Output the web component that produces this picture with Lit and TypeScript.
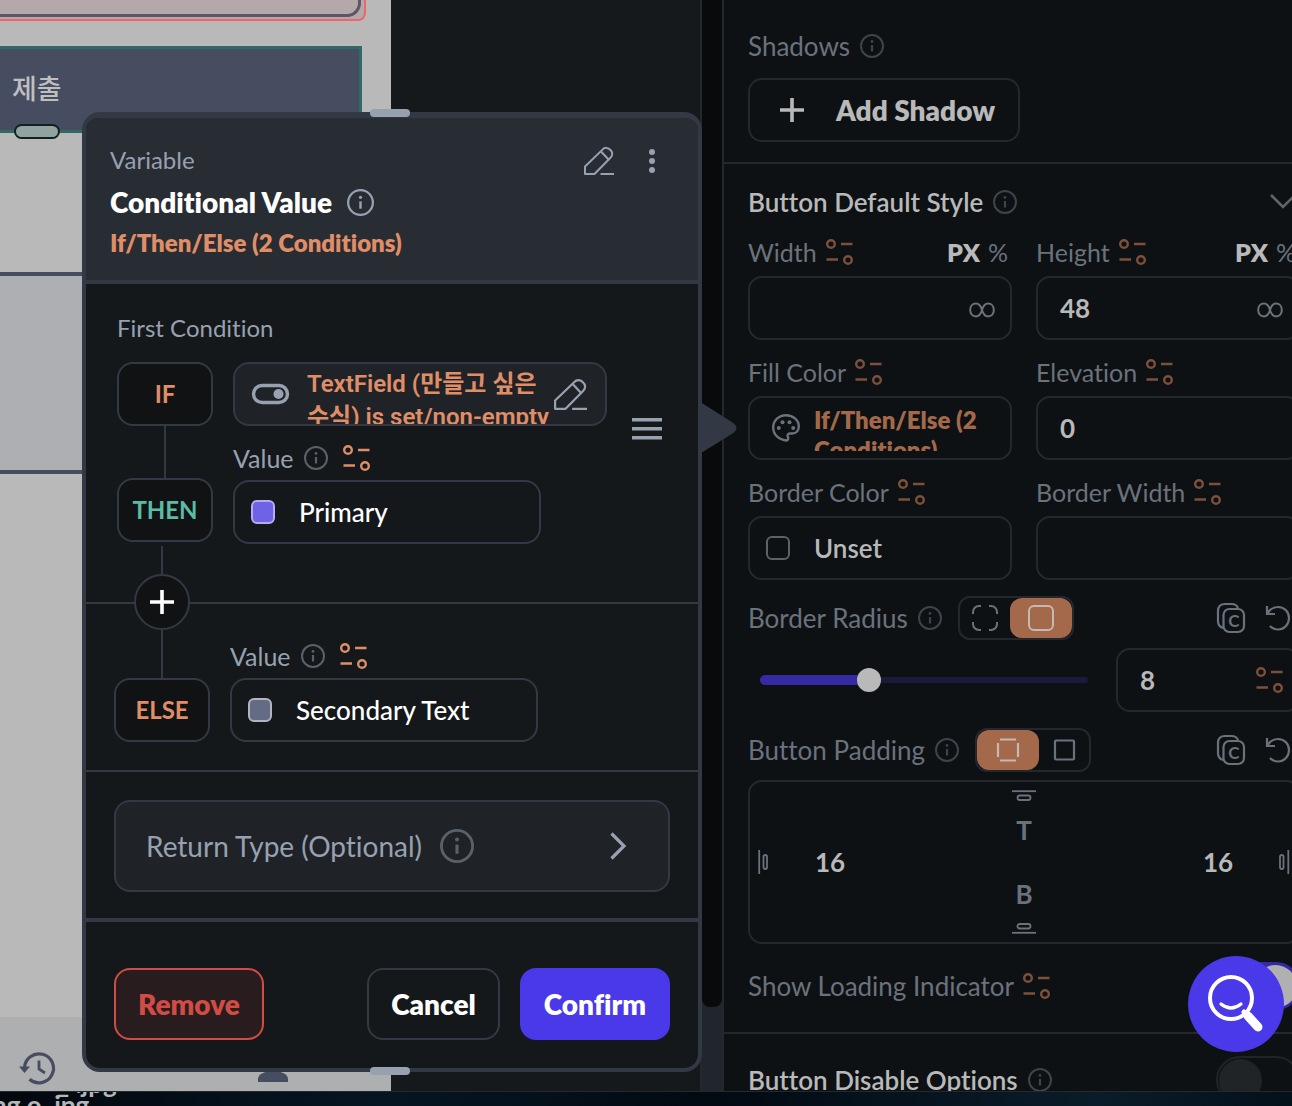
import { LitElement, html, css, svg, nothing, TemplateResult } from "lit";
import { customElement, state } from "lit/decorators.js";

const infoIcon = (cls = "") => html`<svg class="info ${cls}" viewBox="0 0 24 24" aria-hidden="true">
  <circle cx="12" cy="12" r="11" fill="none" stroke="currentColor" stroke-width="2" />
  <path d="M12 11v6.5" stroke="currentColor" stroke-width="2.2" fill="none" />
  <circle cx="12" cy="7.4" r="1.4" fill="currentColor" />
</svg>`;

const bindIcon = () => html`<svg class="bind" viewBox="0 0 27 26" aria-hidden="true" fill="none" stroke="currentColor" stroke-width="2.4">
  <circle cx="5" cy="5" r="3.8" />
  <path d="M15 5h11.5M0.500 20.500h11.500" stroke-linecap="butt" />
  <circle cx="22" cy="21" r="3.8" />
</svg>`;

const pencilIcon = (cls = "") => html`<svg class="pencil ${cls}" viewBox="0 0 30 28" aria-hidden="true" fill="none" stroke="currentColor" stroke-width="2" stroke-linejoin="round">
  <path d="M1 27v-7.500L18.500 2.600a5 5 0 0 1 7.800 .3a5 5 0 0 1 .4 7.600L10.500 27z" />
  <path d="M17 4.500l7.800 8.300" />
  <path d="M16.500 27h13.500" />
</svg>`;

const plusIcon = (cls = "") => html`<svg class="plus ${cls}" viewBox="0 0 24 24" aria-hidden="true">
  <path d="M12 0v24M0 12h24" stroke="currentColor" stroke-width="3.6" />
</svg>`;

const infinityIcon = () => html`<svg class="infinity" viewBox="0 0 26 16" aria-hidden="true" fill="none" stroke="currentColor" stroke-width="2">
  <path d="M13 10C11.800 6 10 3.600 7 3.600C3.400 3.600 1.200 6.200 1.200 10s2.200 6.400 5.800 6.400C10 16.400 11.800 14 13 10S16 3.600 19 3.600c3.600 0 5.800 2.600 5.800 6.400s-2.200 6.400-5.800 6.400C16 16.400 14.200 14 13 10z" />
</svg>`;

const copyIcon = () => html`<svg class="tool" viewBox="0 0 30 30" aria-hidden="true" fill="none" stroke="currentColor" stroke-width="2.200">
  <path d="M6 25C2.500 24 1 21.500 1 18V8c0-4.500 2.500-7 7-7h6.500c3.500 0 5.500 1.300 6.500 4" />
  <rect x="6.500" y="6" width="20.500" height="23" rx="6" />
  <text x="16.800" y="24" text-anchor="middle" fill="currentColor" stroke="none">C</text>
</svg>`;

const undoIcon = () => html`<svg class="tool" viewBox="0 0 30 30" aria-hidden="true" fill="none" stroke="currentColor" stroke-width="2.200">
  <path d="M2 3v8h8" />
  <path d="M2.500 10.500C5 6 8.500 4 13 4c6.500 0 11 5 11 11s-4.500 11.500-11 11.500c-3.500 0-6-1.200-8-3.500" />
</svg>`;

const paletteIcon = () => html`<svg class="palette" viewBox="0 0 28 28" aria-hidden="true" fill="none" stroke="currentColor" stroke-width="2.400">
  <path d="M14 26.500C6.500 25.500 1.200 20.500 1.200 13.500C1.200 6.500 7 1.200 14 1.200S26.800 6 26.800 12.500c0 4.500-3 7-6.500 7h-2.500c-2 0-2.800 1.800-2 3.200c.9 1.600 .4 4-1.800 3.800z" />
  <g fill="currentColor" stroke="none">
    <circle cx="6.800" cy="14" r="2" /><circle cx="10.500" cy="8.300" r="2" />
    <circle cx="17.500" cy="8.300" r="2" /><circle cx="21.200" cy="14" r="2" />
  </g>
</svg>`;

const toggleIcon = () => html`<svg class="switch-icon" viewBox="0 0 37 20" aria-hidden="true">
  <rect x="1.500" y="1.500" width="34" height="17" rx="8.500" fill="none" stroke="currentColor" stroke-width="3.400" />
  <circle cx="26.500" cy="10" r="5" fill="currentColor" />
</svg>`;

const edgeIcon = (side: "top" | "bottom" | "left" | "right") => {
  const flat = side === "top" || side === "bottom";
  const shapes = {
    top: svg`<path d="M0 1.200h24" /><rect x="5.500" y="5.500" width="13" height="4.500" rx="2.200" />`,
    bottom: svg`<path d="M0 9.800h24" /><rect x="5.500" y="1" width="13" height="4.500" rx="2.200" />`,
    left: svg`<path d="M1.200 0v24" /><rect x="5.500" y="5" width="3.500" height="14" rx="1.700" />`,
    right: svg`<path d="M9.300 0v24" /><rect x="1" y="5" width="3.500" height="14" rx="1.700" />`,
  };
  return html`<svg class="edge ${flat ? "flat" : "tall"}" viewBox=${flat ? "0 0 24 11" : "0 0 11 24"}
    aria-hidden="true" fill="none" stroke="currentColor" stroke-width="1.800">${shapes[side]}</svg>`;
};

@customElement("app-root")
export class AppRoot extends LitElement {
  @state() private radius = 8;

  static styles = css`
    :host {
      display: block;
      font-family: Lato, "Noto Sans CJK KR", sans-serif;
      font-variant-ligatures: none;
      --line: #333944;
      --dim-line: #24282e;
      --muted: #98a1b0;
      --orange: #e08e67;
      --dim-orange: #a4694a;
      --blue: #4939e8;
    }
    * { box-sizing: border-box; }
    svg { display: block; flex: none; overflow: visible; }
    button, input { font: inherit; color: inherit; margin: 0; }
    button { background: none; border: 0; padding: 0; cursor: pointer; text-align: left; }
    h1, h2, h3, p { margin: 0; font-weight: inherit; font-size: inherit; }

    .page {
      position: relative;
      display: flex;
      flex-direction: column;
      height: 100vh;
      overflow: hidden;
      background: #020a12;
    }
    .workspace {
      flex: 1;
      min-height: 0;
      display: grid;
      grid-template-columns: minmax(0, 1fr) 20px 570px;
      overflow: hidden;
      border-bottom: 1px solid #24292e;
    }
    .desktop {
      height: 14px;
      overflow: hidden;
      background: linear-gradient(100deg, #03080e, #061522 30%, #020a12 55%, #0a1c29 85%, #04101a);
      color: #b4b6b8;
      font-size: 26px;
      font-weight: 700;
      line-height: 22px;
      white-space: nowrap;
    }
    .desktop p:first-child { margin: -20px 0 0 57px; }
    .desktop p:last-child { margin-left: -8px; }

    /* canvas */
    .canvas { background: #15191c; border-right: 2px solid #24282e; display: flex; min-width: 0; }
    .phone {
      width: 391px;
      flex: none;
      display: flex;
      flex-direction: column;
      background: #b9b9b9;
      color: #474d60;
    }
    .entry {
      height: 21px;
      width: 366px;
      flex: none;
      background: #b5a8aa;
      border: solid #ee666c;
      border-width: 0 2px 2px 0;
      border-radius: 0 0 8px 0;
      padding: 0 3px 2px 0;
    }
    .entry-box { height: 100%; border: solid #5c5566; border-width: 0 3px 3px 0; border-radius: 0 0 14px 0; }
    .submit {
      position: relative;
      display: flex;
      align-items: center;
      flex: none;
      margin-top: 25px;
      width: 362px;
      height: 87px;
      padding: 0 12px 4px;
      background: #474d60;
      border: solid #2f6b62;
      border-width: 3px 3px 3px 0;
      color: #bfbfc0;
      font-size: 27px;
      font-weight: 500;
    }
    .grip {
      position: absolute;
      left: 14px;
      bottom: -9px;
      width: 46px;
      height: 15px;
      border: 2px solid #12211f;
      border-radius: 8px;
      background: #90a3a0;
    }
    .list { flex: none; height: 202px; margin-top: 139px; background: #adafb2; border: solid #474d60; border-width: 4px 0; }
    .blank { flex: 1; }
    .tabs {
      flex: none;
      display: flex;
      height: 74px;
      background: #adafb0;
      overflow: hidden;
      padding: 34px 103px 0 19px;
      justify-content: space-between;
    }
    .history { width: 37px; height: 34px; }
    .person { width: 30px; height: 31px; }

    /* gutter */
    .gutter { background: #21262d; padding-bottom: 84px; display: flex; }
    .gutter span { flex: 1; background: #090a0c; border-radius: 0 0 8px 8px; }

    /* properties panel */
    .panel {
      min-width: 0;
      overflow: hidden;
      background: #0d1114;
      border-left: 2px solid var(--dim-line);
      color: #6b727c;
      font-size: 26px;
      line-height: 32px;
    }
    .group { width: 600px; padding: 22px 24px 30px; border-bottom: 2px solid var(--dim-line); }
    .group.first { padding: 30px 24px 20px; }
    .row { display: flex; align-items: center; gap: 10px; }
    .row.near { gap: 9px; }
    .push { margin-left: auto; }
    .info { width: 24px; height: 24px; color: #3e444b; }
    .bind { width: 27px; height: 26px; color: #7d503a; }
    .title { color: #b9b9b9; font-weight: 600; }
    .outline {
      border: 2px solid var(--dim-line);
      border-radius: 14px;
      height: 64px;
      min-width: 0;
      width: 100%;
    }
    .add-shadow {
      display: flex;
      align-items: center;
      gap: 32px;
      width: 272px;
      padding: 0 22px 0 30px;
      margin-top: 16px;
      color: #b9b9b9;
      font-size: 28px;
      font-weight: 800;
      white-space: nowrap;
    }
    .plus { width: 24px; height: 24px; }
    .chevron-down { width: 30px; height: 16px; color: #5f656e; }
    .fields { display: grid; grid-template-columns: 1fr 1fr; gap: 16px 24px; margin-top: 18px; }
    .field { display: grid; gap: 8px; min-width: 0; }
    .field label { font-size: 25px; }
    .units { display: flex; gap: 8px; margin-left: auto; padding-right: 4px; font-size: 25px; }
    .units .on { color: #b9b9b9; font-weight: 800; }
    .units button { line-height: 32px; }
    .box { display: flex; align-items: center; padding: 0 15px 0 22px; }
    .box input, .pad input {
      flex: 1;
      width: 100%;
      min-width: 0;
      background: none;
      border: 0;
      outline: 0;
      padding: 0;
      color: #b9b9b9;
      font-size: 26px;
      font-weight: 700;
      line-height: 32px;
    }
    .infinity { width: 26px; height: 16px; }
    .swatch-field { display: flex; align-items: center; gap: 14px; padding: 8px 22px; color: #b9b9b9; font-weight: 600; }
    .swatch-field.unset { gap: 24px; padding-left: 16px; }
    .clip { height: 46px; overflow: hidden; line-height: 30px; font-size: 24px; font-weight: 800; color: var(--dim-orange); }
    .palette { width: 28px; height: 28px; color: #6b727c; }
    .swatch { width: 24px; height: 24px; border-radius: 6px; border: 2px solid #5e6266; flex: none; }
    .mode { height: 44px; margin-top: 16px; }
    .segments { display: flex; height: 44px; width: 116px; border: 2px solid var(--dim-line); border-radius: 12px; margin-left: 6px; }
    .segments button { flex: 1; display: grid; place-items: center; border-radius: 12px; }
    .segments .on { flex: 0 0 62px; background: var(--dim-orange); color: #c4bab4; }
    .seg-icon { width: 26px; height: 26px; }
    .tool { width: 30px; height: 30px; }
    .tool text { font-size: 17px; font-weight: 700; }
    .tools { display: flex; gap: 18px; margin-left: auto; padding-right: 5px; }
    .slide-row { display: grid; grid-template-columns: 352px 1fr; gap: 16px; margin-top: 8px; }
    .slider { display: grid; align-items: center; }
    .slider > * { grid-area: 1 / 1; }
    .rail { height: 6px; margin: 0 12px; border-radius: 3px; background: #1c1a3c; }
    .fill { height: 10px; margin: 0 12px; border-radius: 5px; background: #3629a4; justify-self: start; }
    .slider input { appearance: none; background: none; width: 100%; height: 24px; }
    .slider input::-webkit-slider-thumb {
      appearance: none;
      width: 24px;
      height: 24px;
      border-radius: 50%;
      background: #b9b9b9;
    }
    .pad {
      display: grid;
      grid-template-columns: 1fr auto 1fr;
      align-items: center;
      height: 164px;
      margin-top: 8px;
      padding: 8px;
    }
    .pad .middle { display: flex; flex-direction: column; align-items: center; justify-content: space-between; height: 144px; }
    .pad .middle input { text-align: center; width: 40px; flex: none; height: 32px; }
    .pad input::placeholder { color: #6b727c; opacity: 1; }
    .pad .letters { display: grid; gap: 32px; }
    .pad label { display: flex; align-items: center; gap: 46px; }
    .pad .end { justify-content: flex-end; }
    .pad .end input { flex: none; width: 30px; }
    .edge.flat { width: 24px; height: 11px; }
    .edge.tall { width: 11px; height: 24px; }
    .loading { margin-top: 18px; height: 48px; }
    .group.with-toggle { padding-bottom: 22px; }
    .toggle {
      appearance: none;
      width: 84px;
      height: 48px;
      border-radius: 24px;
      border: 2px solid #202428;
      padding: 1px;
      flex: none;
    }
    .toggle::before { content: ""; display: block; width: 43px; height: 43px; border-radius: 50%; background: #202427; }
    .toggle:checked { background: #362aa4; border-color: #362aa4; }
    .toggle:checked::before { margin-left: auto; background: #b0b0b0; }
    .group.last { padding-top: 22px; border: 0; }

    /* variable dialog */
    .dialog {
      position: absolute;
      left: 82px;
      top: 112px;
      width: 620px;
      border: 4px solid var(--line);
      border-top-width: 6px;
      border-radius: 18px;
      background: #14181b;
      color: var(--muted);
      font-size: 24px;
      line-height: 32px;
    }
    .handle { position: absolute; left: 284px; width: 40px; height: 8px; border-radius: 4px; background: #98a1b0; }
    .handle.top { top: -9px; }
    .handle.bottom { bottom: -7px; }
    .pointer { position: absolute; left: 100%; top: 284px; width: 40px; height: 52px; margin-left: 3px; color: var(--line); }
    .head {
      display: flex;
      justify-content: space-between;
      background: #282c33;
      border-bottom: 4px solid var(--line);
      border-radius: 12px 12px 0 0;
      padding: 26px 42px 22px 24px;
    }
    .head h1 { display: flex; align-items: center; gap: 15px; height: 52px; font-size: 28px; font-weight: 800; color: #fff; }
    .head h1 .info { width: 27px; height: 27px; color: var(--muted); }
    .head .sub { font-weight: 800; color: var(--orange); line-height: 30px; }
    .head-tools { display: flex; align-items: center; gap: 34px; height: 34px; }
    .pencil { width: 30px; height: 28px; }
    .pencil.large { width: 33px; height: 31px; }
    .dots { width: 8px; height: 24px; }
    .first-condition { position: relative; padding: 28px 31px 58px; border-bottom: 2px solid var(--line); }
    .branch { display: grid; grid-template-columns: 96px 374px 30px; column-gap: 20px; margin-top: 18px; }
    .steps { display: flex; flex-direction: column; align-items: center; }
    .step {
      display: grid;
      place-items: center;
      width: 96px;
      height: 64px;
      border: 2px solid var(--line);
      border-radius: 16px;
      background: #101213;
      color: var(--orange);
      font-weight: 700;
    }
    .step.then { color: #5bbba5; }
    .wire { width: 2px; height: 52px; background: var(--line); }
    .expression {
      display: flex;
      align-items: center;
      width: 100%;
      height: 64px;
      padding: 0 18px 0 17px;
      border: 2px solid var(--line);
      border-radius: 16px;
      background: #1f2327;
      overflow: hidden;
    }
    .expression .text {
      flex: 1;
      align-self: flex-start;
      height: 60px;
      margin-left: 18px;
      padding-top: 4px;
      font-family: Roboto, "Noto Sans CJK KR", sans-serif;
      font-weight: 600;
      line-height: 33px;
      color: var(--orange);
      white-space: nowrap;
      overflow: visible;
    }
    .expression .text span { display: block; }
    .expression .pencil { margin-left: -40px; }
    .switch-icon { width: 37px; height: 20px; }
    .value-label { display: flex; align-items: center; gap: 10px; margin-bottom: 6px; font-size: 25px; }
    .value-label .bind { color: var(--orange); margin-left: 5px; }
    .value-label .info { color: #59616b; }
    .expression + .value-label { margin-top: 16px; }
    .color {
      display: flex;
      align-items: center;
      gap: 24px;
      width: 308px;
      height: 64px;
      padding: 0 16px;
      border: 2px solid var(--line);
      border-radius: 16px;
      color: #fff;
      font-size: 26px;
      font-weight: 500;
    }
    .color .swatch.primary { background: #6e62e6; border-color: #b3adf3; }
    .color .swatch.secondary { background: #646b85; border-color: #b2b5c1; }
    .drag { align-self: start; margin: 56px 0 0 5px; width: 30px; height: 22px; }
    .insert { position: absolute; left: 48px; bottom: -28px; display: grid; justify-items: center; width: 56px; }
    .insert::before { content: ""; width: 2px; height: 28px; background: var(--line); }
    .insert button {
      display: grid;
      place-items: center;
      width: 56px;
      height: 56px;
      border: 2px solid var(--line);
      border-radius: 50%;
      background: #101213;
      color: #fff;
    }
    .otherwise { display: flex; align-items: flex-end; gap: 20px; padding: 36px 28px 28px; border-bottom: 2px solid var(--line); }
    .otherwise .steps { margin-top: -10px; }
    .otherwise .wire { height: 48px; }
    .return { padding: 28px 28px 26px; border-bottom: 4px solid var(--line); }
    .return button {
      display: flex;
      align-items: center;
      gap: 18px;
      width: 100%;
      height: 92px;
      padding: 0 42px 0 30px;
      border: 2px solid var(--line);
      border-radius: 16px;
      background: #1f2327;
      font-size: 28px;
    }
    .return .info { width: 34px; height: 34px; color: #59616b; }
    .chevron-right { width: 16px; height: 28px; margin-left: auto; }
    .foot { display: flex; gap: 20px; padding: 46px 28px 28px; }
    .foot button {
      height: 72px;
      padding: 0 22px;
      border: 2px solid var(--line);
      border-radius: 16px;
      color: #fff;
      font-size: 28px;
      font-weight: 800;
    }
    .foot .remove { margin-right: auto; color: #d04c45; border-color: #d04c45; background: #281c1e; }
    .foot .confirm { background: var(--blue); border-color: var(--blue); }

    .assist {
      position: absolute;
      right: 8px;
      bottom: 54px;
      width: 96px;
      height: 96px;
      border-radius: 50%;
      background: var(--blue);
      color: #fff;
      display: grid;
      place-items: center;
    }
    .assist svg { width: 56px; height: 60px; }
  `;

  private labelled(text: string, id: string, control: TemplateResult, units = false) {
    return html`<div class="field">
      <div class="row near">
        <label for=${id}>${text}</label>${bindIcon()}
        ${units
          ? html`<span class="units"><button class="on">PX</button><button>%</button></span>`
          : nothing}
      </div>
      ${control}
    </div>`;
  }

  private canvas() {
    return html`<main class="canvas">
      <div class="phone">
        <div class="entry"><div class="entry-box"></div></div>
        <div class="submit">제출<span class="grip"></span></div>
        <div class="list"></div>
        <div class="blank"></div>
        <div class="tabs">
          <svg class="history" viewBox="0 0 37 34" fill="none" stroke="currentColor" stroke-width="3.200" aria-hidden="true">
            <path d="M5.500 17A14.500 14.500 0 1 1 10.500 28.300" />
            <path d="M0 15.500h11L5.500 22z" fill="currentColor" stroke="none" />
            <path d="M20 9.500v8.500l6 4" stroke-width="2.800" />
          </svg>
          <svg class="person" viewBox="0 0 30 31" fill="currentColor" aria-hidden="true">
            <circle cx="15" cy="8" r="7" />
            <path d="M0 31v-3c0-5 7-8 15-8s15 3 15 8v3z" />
          </svg>
        </div>
      </div>
    </main>`;
  }

  private panel() {
    return html`<aside class="panel">
      <section class="group first">
        <div class="row"><span>Shadows</span>${infoIcon()}</div>
        <button class="outline add-shadow">${plusIcon()}Add Shadow</button>
      </section>
      <section class="group with-toggle">
        <div class="row">
          <h2 class="title">Button Default Style</h2>${infoIcon()}
          <svg class="chevron-down push" viewBox="0 0 30 16" fill="none" stroke="currentColor" stroke-width="2.600" aria-hidden="true">
            <path d="M1 1l12 12L25 1" />
          </svg>
        </div>
        <div class="fields">
          ${this.labelled("Width", "width", html`<div class="outline box"><input id="width" />${infinityIcon()}</div>`, true)}
          ${this.labelled("Height", "height", html`<div class="outline box"><input id="height" value="48" />${infinityIcon()}</div>`, true)}
          ${this.labelled("Fill Color", "fill", html`<button id="fill" class="outline swatch-field">
            ${paletteIcon()}<span class="clip">If/Then/Else (2 Conditions)</span></button>`)}
          ${this.labelled("Elevation", "elevation", html`<div class="outline box"><input id="elevation" value="0" /></div>`)}
          ${this.labelled("Border Color", "border-color", html`<button id="border-color" class="outline swatch-field unset">
            <span class="swatch"></span>Unset</button>`)}
          ${this.labelled("Border Width", "border-width", html`<div class="outline box"><input id="border-width" /></div>`)}
        </div>
        <div class="row mode">
          <label for="radius">Border Radius</label>${infoIcon()}
          <div class="segments">
            <button aria-label="Separate corners">
              <svg class="seg-icon" viewBox="0 0 26 26" fill="none" stroke="currentColor" stroke-width="2">
                <path d="M1 9V7a6 6 0 0 1 6-6h2M17 1h2a6 6 0 0 1 6 6v2M25 17v2a6 6 0 0 1-6 6h-2M9 25H7a6 6 0 0 1-6-6v-2" />
              </svg>
            </button>
            <button class="on" aria-label="All corners">
              <svg class="seg-icon" viewBox="0 0 26 26" fill="none" stroke="currentColor" stroke-width="2">
                <rect x="1" y="1" width="24" height="24" rx="5" />
              </svg>
            </button>
          </div>
          <div class="tools">
            <button aria-label="Copy">${copyIcon()}</button><button aria-label="Reset">${undoIcon()}</button>
          </div>
        </div>
        <div class="slide-row">
          <div class="slider">
            <span class="rail"></span>
            <span class="fill" style="width:${(this.radius / 24) * 328}px"></span>
            <input type="range" min="0" max="24" aria-label="Border radius slider" .value=${String(this.radius)}
              @input=${(e: Event) => (this.radius = Number((e.target as HTMLInputElement).value))} />
          </div>
          <div class="outline box"><input id="radius" .value=${String(this.radius)} />${bindIcon()}</div>
        </div>
        <div class="row mode">
          <span>Button Padding</span>${infoIcon()}
          <div class="segments">
            <button class="on" aria-label="Separate sides">
              <svg class="seg-icon" viewBox="0 0 26 26" fill="none" stroke="currentColor" stroke-width="2.200">
                <path d="M5 2.500h16M5 23.500h16M3 6v14M23 6v14" />
              </svg>
            </button>
            <button aria-label="All sides">
              <svg class="seg-icon" viewBox="0 0 26 26" fill="none" stroke="currentColor" stroke-width="2.200">
                <rect x="4" y="3.500" width="19" height="19" rx="1" />
              </svg>
            </button>
          </div>
          <div class="tools">
            <button aria-label="Copy">${copyIcon()}</button><button aria-label="Reset">${undoIcon()}</button>
          </div>
        </div>
        <div class="outline pad">
          <label>${edgeIcon("left")}<input value="16" aria-label="Left" /></label>
          <div class="middle">
            ${edgeIcon("top")}
            <div class="letters">
              <input placeholder="T" aria-label="Top" />
              <input placeholder="B" aria-label="Bottom" />
            </div>
            ${edgeIcon("bottom")}
          </div>
          <label class="end"><input value="16" aria-label="Right" />${edgeIcon("right")}</label>
        </div>
        <div class="row near loading">
          <label for="loading">Show Loading Indicator</label>${bindIcon()}
          <input id="loading" class="toggle push" type="checkbox" checked />
        </div>
      </section>
      <section class="group last">
        <div class="row">
          <label class="title" for="disable">Button Disable Options</label>${infoIcon()}
          <input id="disable" class="toggle push" type="checkbox" />
        </div>
      </section>
    </aside>`;
  }

  private colorValue(id: string, tone: string, name: string) {
    return html`<div class="value-label"><label for=${id}>Value</label>${infoIcon()}${bindIcon()}</div>
      <button id=${id} class="color"><span class="swatch ${tone}"></span>${name}</button>`;
  }

  private dialog() {
    return html`<section class="dialog" role="dialog" aria-labelledby="dialog-title">
      <span class="handle top"></span>
      <header class="head">
        <div>
          <p>Variable</p>
          <h1 id="dialog-title">Conditional Value ${infoIcon()}</h1>
          <p class="sub">If/Then/Else (2 Conditions)</p>
        </div>
        <div class="head-tools">
          <button aria-label="Rename">${pencilIcon()}</button>
          <button aria-label="More">
            <svg class="dots" viewBox="0 0 8 24" fill="currentColor">
              <circle cx="4" cy="3" r="3" /><circle cx="4" cy="12" r="3" /><circle cx="4" cy="21" r="3" />
            </svg>
          </button>
        </div>
      </header>
      <div class="first-condition">
        <h2>First Condition</h2>
        <div class="branch">
          <div class="steps">
            <span class="step">IF</span><span class="wire"></span><span class="step then">THEN</span>
          </div>
          <div>
            <button class="expression">
              ${toggleIcon()}
              <span class="text"><span>TextField (만들고 싶은</span><span>수식) is set/non-empty</span></span>
              ${pencilIcon("large")}
            </button>
            ${this.colorValue("then-value", "primary", "Primary")}
          </div>
          <svg class="drag" viewBox="0 0 30 22" fill="currentColor" aria-hidden="true">
            <path d="M0 0h30v3.500H0zM0 9h30v3.500H0zM0 18h30v3.500H0z" />
          </svg>
        </div>
        <div class="insert"><button aria-label="Add condition">${plusIcon()}</button></div>
      </div>
      <div class="otherwise">
        <div class="steps"><span class="wire"></span><span class="step">ELSE</span></div>
        <div>${this.colorValue("else-value", "secondary", "Secondary Text")}</div>
      </div>
      <div class="return">
        <button>Return Type (Optional) ${infoIcon()}
          <svg class="chevron-right" viewBox="0 0 16 28" fill="none" stroke="currentColor" stroke-width="3.200" aria-hidden="true">
            <path d="M1.500 1.500L14 14L1.500 26.500" />
          </svg>
        </button>
      </div>
      <footer class="foot">
        <button class="remove">Remove</button>
        <button>Cancel</button>
        <button class="confirm">Confirm</button>
      </footer>
      <span class="handle bottom"></span>
      <svg class="pointer" viewBox="0 0 40 52" fill="currentColor" aria-hidden="true">
        <path d="M0 0.500L30 19.500Q41 26 30 32.500L0 51z" />
      </svg>
    </section>`;
  }

  render() {
    return html`<div class="page">
      <div class="workspace">
        ${this.canvas()}
        <div class="gutter"><span></span></div>
        ${this.panel()}
      </div>
      <div class="desktop"><p>_ .jpg</p><p>ng o .jpg</p></div>
      ${this.dialog()}
      <button class="assist" aria-label="Search help">
        <svg viewBox="0 0 56 60" fill="none" stroke="currentColor" stroke-linecap="round">
          <circle cx="23" cy="24" r="21" stroke-width="4" />
          <path d="M13 30q10 8 20 0" stroke-width="3.200" />
          <path d="M40 42l10 11" stroke-width="9" />
          <path d="M36 38l4 4" stroke-width="5" />
        </svg>
      </button>
    </div>`;
  }
}
